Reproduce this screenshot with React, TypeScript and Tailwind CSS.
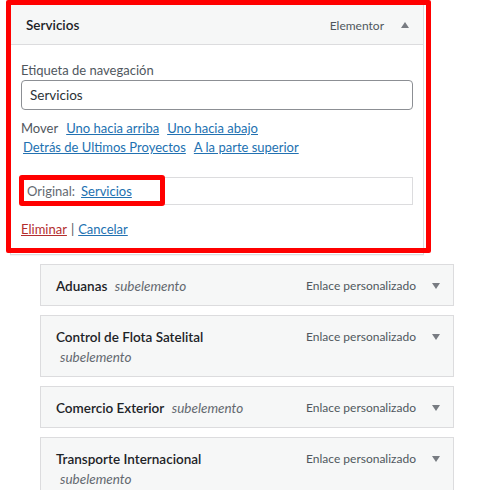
const items = [
  { title: 'Aduanas' },
  { title: 'Control de Flota Satelital' },
  { title: 'Comercio Exterior' },
  { title: 'Transporte Internacional' },
];

function Arrow({ up }: { up?: boolean }) {
  return (
    <svg width="8" height="6" viewBox="0 0 8 6" className="shrink-0">
      {up ? (
        <polygon points="4,0 8,6 0,6" fill="#787c82" />
      ) : (
        <polygon points="0,0 8,0 4,6" fill="#787c82" />
      )}
    </svg>
  );
}

function SubItem({ title }: { title: string }) {
  return (
    <div className="mt-[9px] flex w-[414px] items-start border border-[#dcdcde] bg-[#f6f7f7] pb-[9px] pl-[15px] pr-[13px] pt-[11px]">
      <div className="w-[215px] text-[13.5px] leading-[20px] text-[#1d2327]">
        <span className="font-semibold">{title}</span>{' '}
        <span className="ml-[4px] italic text-[#646970]">subelemento</span>
      </div>
      <div className="ml-auto flex items-center gap-[16px] text-[12px] leading-[20px] text-[#50575e]">
        <span>Enlace personalizado</span>
        <Arrow />
      </div>
    </div>
  );
}

export default function App() {
  return (
    <div
      className="relative h-[490px] w-[482px] overflow-hidden bg-white"
      style={{ fontFamily: 'Lato, "Noto Sans", sans-serif' }}
    >
      <div className="ml-[10px] mt-[3px] w-[414px] border border-[#dcdcde] bg-white shadow-[0_1px_1px_rgba(0,0,0,0.04)]">
        <div className="flex h-[41px] items-center border-b border-[#dcdcde] bg-[#f6f7f7] pl-[15px] pr-[14px] pt-[3px]">
          <span className="text-[13.5px] font-semibold text-[#1d2327]">Servicios</span>
          <span className="ml-auto text-[12px] text-[#50575e]">Elementor</span>
          <span className="ml-[17px] -mt-[2px]">
            <Arrow up />
          </span>
        </div>
        <div className="px-[10px] pb-[15px] pt-[15px] text-[13px]">
          <div className="leading-[20px] text-[#50575e]">Etiqueta de navegación</div>
          <div className="flex h-[30px] items-center rounded-[4px] border border-[#8c8f94] px-[8px] text-[13.5px] text-[#2c3338]">
            Servicios
          </div>
          <div className="mt-[9px] leading-[19px]">
            <div className="flex gap-[8px]">
              <span className="text-[#50575e]">Mover</span>
              <a className="text-[#2271b1] underline">Uno hacia arriba</a>
              <a className="text-[#2271b1] underline">Uno hacia abajo</a>
            </div>
            <div className="flex gap-[8px] pl-[2px]">
              <a className="text-[#2271b1] underline">Detrás de Ultimos Proyectos</a>
              <a className="text-[#2271b1] underline">A la parte superior</a>
            </div>
          </div>
          <div className="mt-[20px] flex h-[28px] items-center border border-[#dcdcde] px-[5px] pt-[2px]">
            <span className="text-[#646970]">Original:</span>
            <a className="ml-[6px] text-[#2271b1] underline">Servicios</a>
          </div>
          <div className="mt-[14px] leading-[20px]">
            <a className="text-[#b32d2e] underline">Eliminar</a>
            <span className="mx-[4px] text-[#50575e]">|</span>
            <a className="text-[#2271b1] underline">Cancelar</a>
          </div>
        </div>
      </div>

      <div className="ml-[40px] mt-[1px]">
        {items.map((it) => (
          <SubItem key={it.title} title={it.title} />
        ))}
      </div>

      <div className="pointer-events-none absolute left-[6px] top-0 h-[253px] w-[425px] rounded-[2px] border-[5px] border-[#ff0000]" />
      <div className="pointer-events-none absolute left-[19px] top-[175px] h-[31px] w-[146px] rounded-[3px] border-[5px] border-[#ff0000]" />
    </div>
  );
}
